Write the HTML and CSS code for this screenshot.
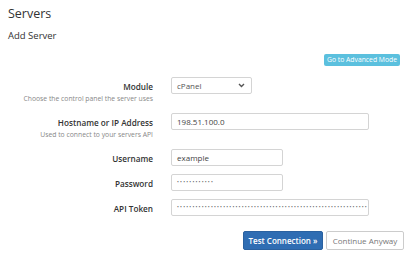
FILE: index.html
```html
<!DOCTYPE html>
<html>
<head>
<meta charset="utf-8">
<link rel="stylesheet" href="styles.css">
</head>
<body>
<div class="page">
  <h1 class="title">Servers</h1>
  <h2 class="subtitle">Add Server</h2>
  <div class="adv-row"><button class="btn-info">Go to Advanced Mode</button></div>
  <div class="form">
    <div class="row hinted">
      <div class="label-cell"><div class="label">Module</div><div class="hint">Choose the control panel the server uses</div></div>
      <div class="control">
        <div class="select w-sm">
          <span>cPanel</span>
          <svg class="chev" width="7" height="5" viewBox="0 0 7 5"><path d="M1 1 L3.5 3.5 L6 1" fill="none" stroke="#555" stroke-width="1.4"/></svg>
        </div>
      </div>
    </div>
    <div class="row hinted">
      <div class="label-cell"><div class="label">Hostname or IP Address</div><div class="hint">Used to connect to your servers API</div></div>
      <div class="control"><div class="input w-lg">198.51.100.0</div></div>
    </div>
    <div class="row">
      <div class="label-cell"><div class="label">Username</div></div>
      <div class="control"><div class="input w-md">example</div></div>
    </div>
    <div class="row">
      <div class="label-cell"><div class="label">Password</div></div>
      <div class="control"><div class="input w-md dots">••••••••••••</div></div>
    </div>
    <div class="row">
      <div class="label-cell"><div class="label">API Token</div></div>
      <div class="control"><div class="input w-lg dots">••••••••••••••••••••••••••••••••••••••••••••••••••••••••••••••</div></div>
    </div>
  </div>
  <div class="actions">
    <button class="btn-primary">Test Connection »</button>
    <button class="btn-default">Continue Anyway</button>
  </div>
</div>
</body>
</html>
```
FILE: styles.css
```css
html, body {
  margin: 0;
  padding: 0;
  background: #fff;
}
body {
  font-family: "Open Sans", "Noto Sans", sans-serif;
  color: #333;
}
.page {
  padding: 4px 0 0 8px;
}
.title {
  margin: 0;
  font-size: 12.5px;
  line-height: 20px;
  font-weight: 400;
  color: #333;
}
.subtitle {
  margin: 4px 0 0 0;
  font-size: 9.5px;
  line-height: 16px;
  font-weight: 400;
  color: #333;
}
.adv-row {
  display: flex;
  justify-content: flex-end;
  padding-right: 17px;
  margin-top: 10px;
}
.btn-info {
  height: 12px;
  padding: 0 3px;
  border: none;
  border-radius: 2px;
  background: #5bc0de;
  color: #fff;
  font-family: inherit;
  font-size: 6.8px;
  line-height: 12px;
}
.form {
  margin-top: 11px;
  display: flex;
  flex-direction: column;
  gap: 8px;
}
.row {
  display: grid;
  grid-template-columns: 145px 1fr;
  column-gap: 18px;
}
.row.hinted {
  height: 28px;
}
.label-cell {
  text-align: right;
  padding-top: 3px;
}
.label {
  font-size: 8.2px;
  line-height: 13px;
  font-weight: 600;
  color: #333;
}
.hint {
  font-size: 6.8px;
  line-height: 11px;
  color: #888;
  white-space: nowrap;
}
.control {
  display: flex;
  align-items: flex-start;
}
.select, .input {
  box-sizing: border-box;
  height: 17px;
  border: 1px solid #d4d4d4;
  border-radius: 2px;
  padding: 0 5px;
  font-size: 8px;
  line-height: 15px;
  color: #444;
  white-space: nowrap;
  overflow: hidden;
}
.select {
  display: flex;
  align-items: center;
  justify-content: space-between;
  padding-right: 6px;
  color: #555;
}
.chev {
  display: block;
}
.w-sm { width: 81px; }
.w-md { width: 112px; }
.w-lg { width: 198px; }
.dots {
  font-size: 5px;
  letter-spacing: 1.2px;
  color: #666;
}
.actions {
  display: flex;
  justify-content: flex-end;
  gap: 3px;
  padding-right: 13px;
  margin-top: 15px;
}
.btn-primary, .btn-default {
  box-sizing: border-box;
  height: 19px;
  border-radius: 2px;
  font-family: inherit;
  font-size: 8px;
  line-height: 17px;
  padding: 0;
}
.btn-primary {
  width: 80px;
  background: #2f6db3;
  border: 1px solid #2a61a0;
  color: #fff;
  font-weight: 600;
}
.btn-default {
  width: 78px;
  background: #fff;
  border: 1px solid #ccc;
  color: #777;
}
```
